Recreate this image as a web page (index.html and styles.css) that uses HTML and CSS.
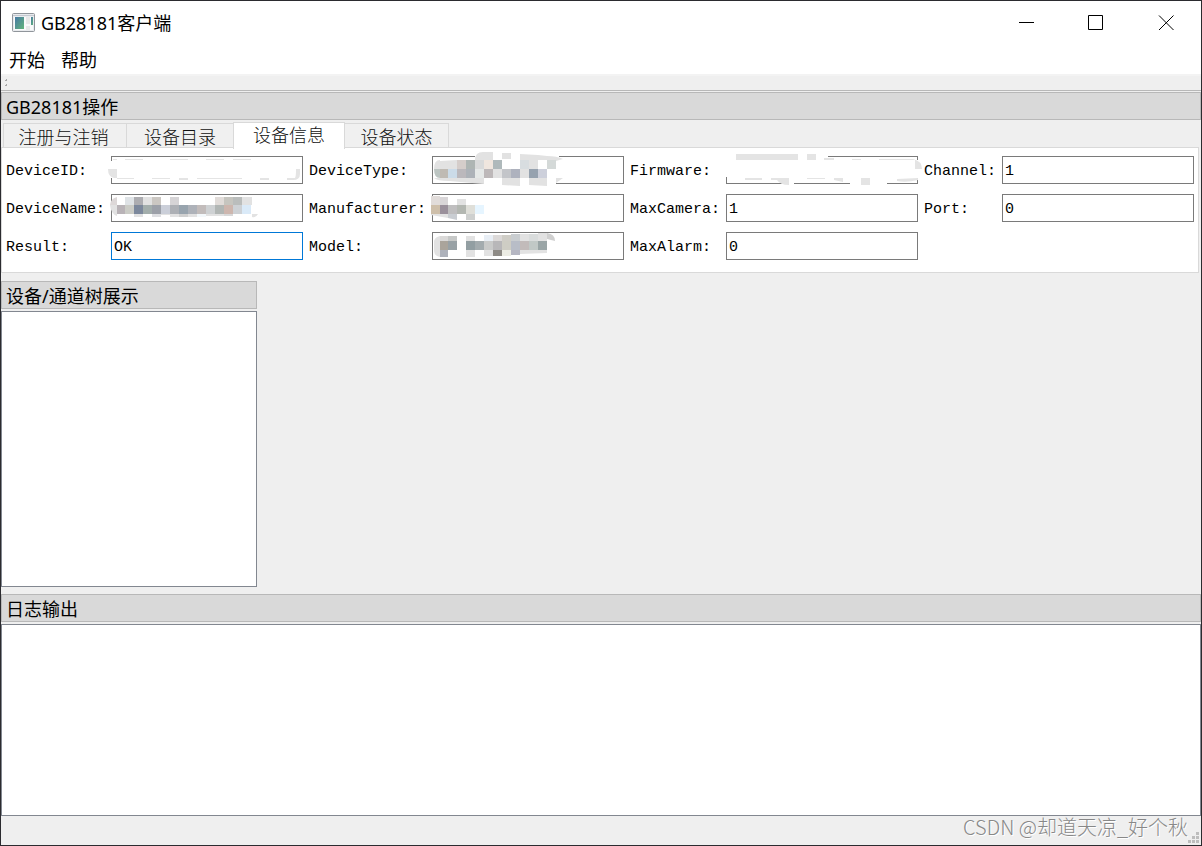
FILE: index.html
```html
<!DOCTYPE html>
<html lang="zh-CN">
<head>
<meta charset="utf-8">
<title>GB28181客户端</title>
<link rel="stylesheet" href="styles.css">
</head>
<body>
<div class="window">
  <header class="titlebar">
    <svg class="app-icon" width="24" height="20" viewBox="0 0 24 20" aria-hidden="true">
      <defs><linearGradient id="screen" x1="0" y1="0" x2="1" y2="1"><stop offset="0" stop-color="#4779a5"/><stop offset="1" stop-color="#63b57a"/></linearGradient></defs>
      <rect x="0.5" y="0.5" width="22" height="18" rx="1" fill="#e9ebee" stroke="#90959b"/>
      <path d="M1 2.5h21" stroke="#c4c9d0"/>
      <rect x="2" y="4" width="19" height="13" fill="#fafafa"/>
      <rect x="3" y="4" width="9" height="12" fill="url(#screen)"/>
      <rect x="14" y="4" width="4" height="7" fill="#e8e8e8"/>
      <rect x="14" y="13" width="4" height="4" fill="#e8e8e8"/>
      <rect x="19" y="4" width="2" height="8" fill="url(#screen)"/>
    </svg>
    <h1 class="app-title">GB28181客户端</h1>
    <div class="window-buttons">
      <button class="window-button" aria-label="最小化"><svg width="16" height="16" viewBox="0 0 16 16"><path d="M1 7.5h15" stroke="#000"/></svg></button>
      <button class="window-button" aria-label="最大化"><svg width="16" height="16" viewBox="0 0 16 16"><path d="M0.5 0.5h14v14h-14z" fill="none" stroke="#000"/></svg></button>
      <button class="window-button" aria-label="关闭"><svg width="16" height="16" viewBox="0 0 16 16"><path d="M1 0.5l14.5 14.5M15.5 0.5l-14.5 14.5" stroke="#000"/></svg></button>
    </div>
  </header>
  <nav class="menubar">
    <button class="menu-item">开始</button>
    <button class="menu-item">帮助</button>
  </nav>
  <div class="toolbar">
    <svg width="3" height="8" viewBox="0 0 3 8" aria-hidden="true"><path d="M1 0h1v2H1zM0 1h1v1H0zM1 5h1v2H1zM0 6h1v1H0z" fill="#a8a8a8"/></svg>
  </div>

  <section class="dock">
    <h2 class="dock-title">GB28181操作</h2>
    <div class="tabs" role="tablist">
      <button class="tab tab-wide" role="tab">注册与注销</button>
      <button class="tab tab-mid" role="tab">设备目录</button>
      <button class="tab tab-active" role="tab" aria-selected="true">设备信息</button>
      <button class="tab tab-last" role="tab">设备状态</button>
    </div>
    <form class="pane">
      <label for="device-id">DeviceID:</label>
      <div class="field"><input id="device-id" type="text">
        <svg class="mosaic" width="192" height="28" viewBox="0 0 192 28" aria-hidden="true">
          <path fill="#fff" d="M-3 5h10v17h-10zM186 5h5v17h-5z"/>
          <path fill="#7a7a7a" d="M191 5h1v17h-1z"/>
          <path fill="#e4e4e4" d="M2 3h4v1H2zM14 3h18v1H14zM59 3h18v1H59zM95 3h18v1H95zM122 3h18v1h-18zM6 22h17v1H6zM41 22h18v1H41zM68 22h9v2h-9zM86 22h45v1H86zM149 22h9v2h-9zM176 22h8q1-1 1-9h4v5q0 6-7 6h-6zM-3 13h9v9H3q-6-1-6-9z"/>
        </svg></div>
      <label for="device-type">DeviceType:</label>
      <div class="field"><input id="device-type" type="text">
        <svg class="mosaic" width="192" height="28" viewBox="0 0 192 28" aria-hidden="true">
          <path fill="#fff" d="M43-4h84v8H43zM52 22h72v6H52z"/>
          <path fill="#e2e2e2" d="M2 13q0-9 6-9v9zM43 4q0-8 8-8h10v8zM70-3h9v6h-9zM88-2l18 1v5H88zM106-1l9 1v4h-9zM115 0q10 0 16 3l-7 2h-9zM8 5l17-1v9H8zM2 22h50v6l-35-3q-12 0-15-3zM70 22h18v8l-18-1zM97 22h18v8l-18-1zM124 22h7l-7 5zM61 13h9v9h-9zM88 13h9v9h-9zM97 4h9v9h-9z"/>
          <rect x="25" y="4" width="9" height="9" fill="#d5cdca"/><rect x="34" y="4" width="9" height="9" fill="#aeb5b3"/><rect x="43" y="4" width="9" height="9" fill="#d9dada"/><rect x="52" y="4" width="9" height="9" fill="#f0e6de"/><rect x="61" y="4" width="9" height="9" fill="#afb9bb"/><rect x="88" y="4" width="9" height="9" fill="#d8dde0"/><rect x="115" y="4" width="9" height="9" fill="#d4d9d8"/>
          <path d="M2 13h6v9q-6 0-6-9z" fill="#bcc5c2"/><rect x="8" y="13" width="8" height="9" fill="#bfbab3"/><rect x="16" y="13" width="9" height="9" fill="#cbdbe8"/><rect x="25" y="13" width="9" height="9" fill="#bbb8bc"/><rect x="34" y="13" width="9" height="9" fill="#adb2b8"/><rect x="43" y="13" width="9" height="9" fill="#e5e8e7"/><rect x="52" y="13" width="9" height="9" fill="#bdb8b9"/><rect x="70" y="13" width="9" height="9" fill="#c3c5c9"/><rect x="79" y="13" width="9" height="9" fill="#aeb2be"/><rect x="97" y="13" width="9" height="9" fill="#96a2af"/><rect x="106" y="13" width="9" height="9" fill="#cdd0db"/>
        </svg></div>
      <label for="firmware">Firmware:</label>
      <div class="field"><input id="firmware" type="text">
        <svg class="mosaic" width="192" height="28" viewBox="0 0 192 28" aria-hidden="true">
          <path fill="#fff" d="M-2-2h104v5h-104zM-2 0h5v21h-5zM56 23h12v6H56zM124 23h37v6h-37zM189 4h6v18h-6z"/>
          <path fill="#e4e4e4" d="M10-2h62v6H10zM81-2h9v6h-9zM98 2h10v2H98zM126 3h9v1h-9zM153 3h34q9 2 9 10h-7V4h-36zM19 22h17v2H19zM45 22h18v7q-9 0-12-5h-6zM81 22h18v1H81zM108 22h9v4l-9-2zM135 22h9v7h-9zM171 23l21-1v2q-12 3-21 1z"/>
        </svg></div>
      <label for="channel">Channel:</label>
      <div class="field"><input id="channel" type="text" value="1"></div>

      <label for="device-name">DeviceName:</label>
      <div class="field"><input id="device-name" type="text">
        <svg class="mosaic" width="192" height="28" viewBox="0 0 192 28" aria-hidden="true">
          <path fill="#ddd8d8" d="M-1 11Q0 4 6 3v8z"/><path fill="#e2e2e2" d="M-1 11h7v11q-6-2-7-11zM32 3h9v8h-9zM131 3h10v8h-10zM23 20h9v3h-9zM50 20h9v1h-9zM59 20h9v3h-9zM77 20h9v3h-9zM95 20h18v2H95zM141 20h6q-2 4-6 3z"/>
          <rect x="14" y="3" width="9" height="8" fill="#dfe3e6"/><rect x="23" y="3" width="9" height="8" fill="#adadb1"/><rect x="41" y="3" width="9" height="8" fill="#cbc7c2"/><rect x="59" y="3" width="9" height="8" fill="#d6d4d6"/><rect x="104" y="3" width="9" height="8" fill="#e1dcd9"/><rect x="113" y="3" width="9" height="8" fill="#c6c5bf"/><rect x="122" y="3" width="9" height="8" fill="#babdbc"/>
          <rect x="6" y="11" width="8" height="9" fill="#b9b3b7"/><rect x="14" y="11" width="9" height="9" fill="#cbccc6"/><rect x="23" y="11" width="9" height="9" fill="#7c889c"/><rect x="32" y="11" width="9" height="9" fill="#a3aeac"/><rect x="41" y="11" width="9" height="9" fill="#9ca0a8"/><rect x="50" y="11" width="9" height="9" fill="#cbcfd9"/><rect x="59" y="11" width="9" height="9" fill="#adb0b5"/><rect x="68" y="11" width="9" height="9" fill="#98a4ae"/><rect x="77" y="11" width="9" height="9" fill="#aeb2b9"/><rect x="86" y="11" width="9" height="9" fill="#c2bcbb"/><rect x="95" y="11" width="9" height="9" fill="#ced1d3"/><rect x="104" y="11" width="9" height="9" fill="#b1b6b4"/><rect x="113" y="11" width="9" height="9" fill="#cdb6ae"/><rect x="122" y="11" width="9" height="9" fill="#cdd1d5"/><rect x="131" y="11" width="9" height="9" fill="#daeaf8"/>
          <rect x="41" y="20" width="9" height="3" fill="#dedfe2"/><rect x="68" y="20" width="9" height="3" fill="#d0d0d0"/><rect x="86" y="20" width="9" height="3" fill="#f3f8fb"/><rect x="113" y="20" width="9" height="2" fill="#d8d8d8"/>
        </svg></div>
      <label for="manufacturer">Manufacturer:</label>
      <div class="field"><input id="manufacturer" type="text">
        <svg class="mosaic" width="192" height="28" viewBox="0 0 192 28" aria-hidden="true">
          <rect x="-1" y="2" width="9" height="9" fill="#e1dcda"/><rect x="8" y="3" width="8" height="8" fill="#d9d6d8"/><rect x="25" y="5" width="9" height="6" fill="#e2e2e2"/>
          <rect x="-1" y="11" width="9" height="9" fill="#cebfaa"/><rect x="8" y="11" width="8" height="9" fill="#9a909b"/><rect x="16" y="11" width="9" height="9" fill="#bfbebf"/><rect x="25" y="11" width="9" height="9" fill="#b3b7b1"/><rect x="34" y="11" width="9" height="9" fill="#dfdfd9"/><rect x="43" y="11" width="9" height="9" fill="#e6f5ff"/>
          <path d="M-1 20h17v4L-1 21z" fill="#e2e2e2"/><path d="M16 20h9v6l-9-2z" fill="#c9cdd2"/><rect x="34" y="20" width="9" height="6" fill="#ced0cf"/>
        </svg></div>
      <label for="max-camera">MaxCamera:</label>
      <div class="field"><input id="max-camera" type="text" value="1"></div>
      <label for="port">Port:</label>
      <div class="field"><input id="port" type="text" value="0"></div>

      <label for="result">Result:</label>
      <div class="field"><input id="result" class="input-focused" type="text" value="OK"></div>
      <label for="model">Model:</label>
      <div class="field"><input id="model" type="text">
        <svg class="mosaic" width="192" height="28" viewBox="0 0 192 28" aria-hidden="true">
          <path fill="#e2e2e2" d="M2 9q1-4 6-5v21q-6-1-6-7zM34 4h9v5h-9zM88 2h9v7h-9zM106 1h9v8h-9zM34 18h9v7h-9zM52 18h9v6h-9zM88 18h27v3l-27 1z"/>
          <rect x="8" y="4" width="8" height="5" fill="#dad9d8"/><rect x="16" y="4" width="9" height="5" fill="#c6c8c7"/><rect x="52" y="3" width="9" height="6" fill="#e8eef5"/><rect x="61" y="3" width="9" height="6" fill="#dcd9d8"/><rect x="70" y="3" width="9" height="6" fill="#cfcdc6"/><rect x="79" y="2" width="9" height="7" fill="#c9cdd0"/><rect x="97" y="2" width="9" height="7" fill="#d9dcdc"/><path d="M115 1q8 1 8 8l-8-2z" fill="#d0d0d0"/>
          <rect x="8" y="9" width="8" height="9" fill="#aaa49b"/><rect x="16" y="9" width="9" height="9" fill="#98a1a5"/><rect x="34" y="9" width="9" height="9" fill="#929ea2"/><rect x="43" y="9" width="9" height="9" fill="#a3abae"/><rect x="52" y="9" width="9" height="9" fill="#c9cac9"/><rect x="61" y="9" width="9" height="9" fill="#b8b7b9"/><rect x="70" y="9" width="9" height="9" fill="#cecdc4"/><rect x="79" y="9" width="9" height="9" fill="#b8bdc7"/><rect x="88" y="9" width="9" height="9" fill="#c2bbba"/><rect x="97" y="9" width="9" height="9" fill="#c1c8c6"/><rect x="106" y="9" width="9" height="9" fill="#9aa5a6"/>
          <rect x="8" y="18" width="8" height="7" fill="#aeb2bb"/><rect x="61" y="18" width="9" height="6" fill="#8e8b86"/><rect x="70" y="18" width="9" height="6" fill="#ecece4"/><rect x="79" y="18" width="9" height="5" fill="#b5b6c2"/>
        </svg></div>
      <label for="max-alarm">MaxAlarm:</label>
      <div class="field"><input id="max-alarm" type="text" value="0"></div>
    </form>
  </section>

  <main class="workspace">
    <section class="tree-dock">
      <h2 class="dock-title">设备/通道树展示</h2>
      <div class="tree" role="tree"></div>
    </section>
  </main>

  <section class="dock">
    <h2 class="dock-title">日志输出</h2>
    <textarea class="log" aria-label="日志输出" readonly></textarea>
  </section>

  <footer class="statusbar">
    <span class="watermark">CSDN @却道天凉_好个秋</span>
    <svg class="grip" width="11" height="11" viewBox="0 0 11 11" aria-hidden="true"><path d="M8 0h3v3H8zM4 4h3v3H4zM8 4h3v3H8zM0 8h3v3H0zM4 8h3v3H4zM8 8h3v3H8z" fill="#bdbdbd"/></svg>
  </footer>
</div>
</body>
</html>
```

FILE: styles.css
```css
* { box-sizing: border-box; }

body {
  margin: 0;
  font-family: "Noto Sans", "Noto Sans CJK SC", sans-serif;
  font-size: 18px;
  line-height: 24px;
  color: #000;
}

button {
  font: inherit;
  color: inherit;
  border: 0;
  padding: 0;
  background: none;
}

.window {
  display: flex;
  flex-direction: column;
  min-height: 100vh;
  border: 1px solid #2b2b2f;
  background: #efefef;
}

.titlebar {
  display: flex;
  align-items: center;
  height: 44px;
  padding-left: 11px;
  background: #fff;
}

.app-icon { margin-right: 5px; }

.app-title {
  flex: 1;
  margin: 0;
  font-size: 18px;
  font-weight: 400;
}

.window-buttons { display: flex; }

.window-button {
  display: grid;
  place-items: center;
  width: 70px;
  height: 44px;
}

.menubar {
  display: flex;
  gap: 16px;
  height: 31px;
  padding: 0 8px;
  align-items: center;
  background: #fff;
  border-bottom: 2px solid #f3f3f3;
}

.toolbar {
  height: 15px;
  padding: 3px 4px;
  line-height: 0;
  border-bottom: 1px solid #b8b8b8;
}

.dock-title {
  height: 28px;
  margin: 0 0 2px;
  padding: 2px 4px;
  font-size: 18px;
  font-weight: 400;
  line-height: 24px;
  background: #d9d9d9;
  border: 1px solid #b8b8b8;
}

.toolbar + .dock { margin-top: 1px; }

.tabs {
  display: flex;
  align-items: flex-end;
  height: 26px;
  padding-left: 2px;
  font-family: "Noto Sans CJK SC", sans-serif;
  font-weight: 300;
}

.tab {
  height: 24px;
  line-height: 22px;
  margin-bottom: 1px;
  border: 1px solid #d9d9d9;
  border-width: 1px 1px 0 0;
  background: #f0f0f0;
  color: #111;
}

.tab-wide { width: 124px; padding-right: 3px; border-left-width: 1px; }
.tab-mid { width: 106px; border-right: 0; }
.tab-last { width: 104px; }

.tab-active {
  position: relative;
  width: 112px;
  height: 27px;
  margin-bottom: -1px;
  padding-bottom: 4px;
  border-left-width: 1px;
  background: #fff;
}

.pane {
  display: grid;
  grid-template-columns: repeat(4, max-content minmax(0, 1fr));
  gap: 10px 6px;
  margin: -1px 2px 8px 0;
  padding: 8px 4px 12px;
  border: 1px solid #d9d9d9;
  background: #fff;
  font-family: "Liberation Mono", monospace;
  font-size: 15px;
  line-height: 28px;
}

.pane label {
  height: 28px;
  padding-top: 2px;
}

.field { position: relative; height: 28px; }

.field input {
  display: block;
  width: 100%;
  height: 28px;
  padding: 3px 2px 0;
  border: 1px solid #7a7a7a;
  border-radius: 0;
  background: #fff;
  font: inherit;
  color: #000;
  outline: 0;
}

.field .input-focused { border-color: #0078d7; }

.mosaic {
  position: absolute;
  top: 0;
  left: 0;
  overflow: visible;
  pointer-events: none;
}

.workspace {
  display: flex;
  flex: 1;
  margin-bottom: 7px;
}

.tree-dock {
  display: flex;
  flex-direction: column;
  width: 256px;
}

.tree {
  flex: 1;
  background: #fff;
  border: 1px solid #828790;
}

.log {
  display: block;
  width: 100%;
  height: 192px;
  border: 1px solid #828790;
  border-radius: 0;
  background: #fff;
  resize: none;
  outline: 0;
}

.statusbar {
  display: flex;
  justify-content: flex-end;
  align-items: flex-end;
  height: 29px;
  padding: 0 2px 2px;
}

.watermark {
  align-self: flex-start;
  font-family: "Noto Sans CJK SC", sans-serif;
  font-size: 20px;
  line-height: 22px;
  font-weight: 300;
  color: #888;
  text-shadow: 1px 1px 0 #fff;
}
```
